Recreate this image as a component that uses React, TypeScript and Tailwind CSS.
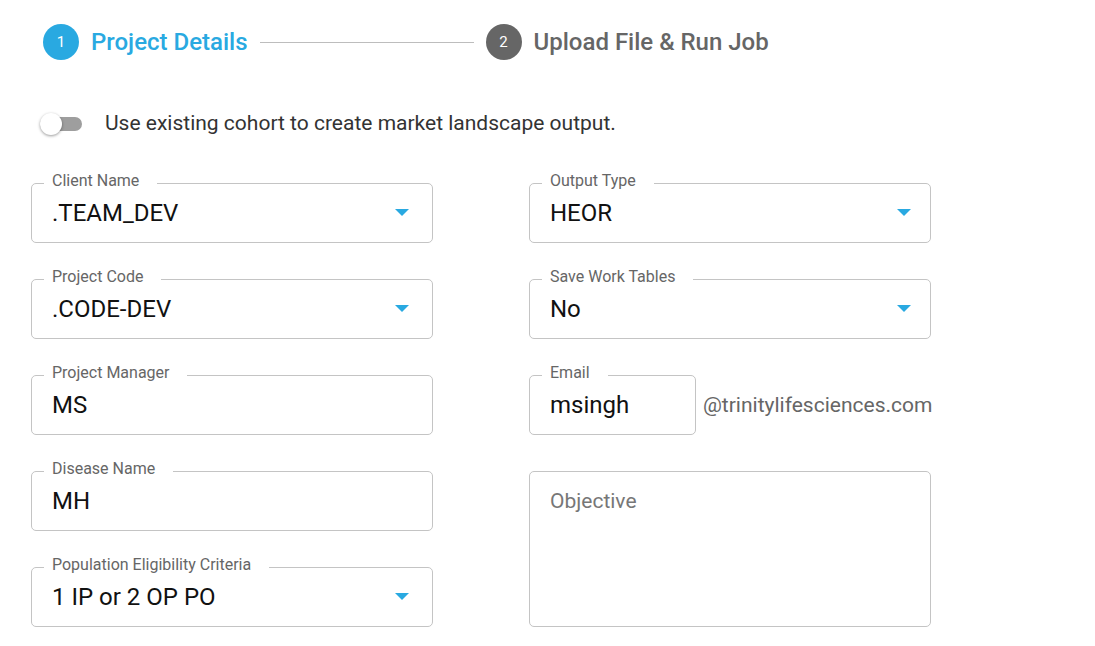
import React from "react";

const BLUE = "#29a9e1";

function Arrow() {
  return (
    <svg width="14" height="7" viewBox="0 0 14 7" className="shrink-0">
      <path d="M0 0 L14 0 L7 7 Z" fill={BLUE} />
    </svg>
  );
}

function Field({
  label,
  value,
  select,
  className = "w-[402px]",
  pr = "pr-[23px]",
}: {
  label: string;
  value: string;
  select?: boolean;
  className?: string;
  pr?: string;
}) {
  return (
    <div className={`relative h-[60px] rounded-[5px] border border-[#c4c4c4] ${className}`}>
      <span className="absolute left-[12px] top-[-13px] bg-white pl-[8px] pr-[18px] text-[16px] leading-[20px] text-[#666]">
        {label}
      </span>
      <div className={`flex h-full items-center justify-between pl-[20px] ${pr}`}>
        <span className="text-[24px] text-[#111]">{value}</span>
        {select && <Arrow />}
      </div>
    </div>
  );
}

export default function App() {
  return (
    <div
      className="h-[646px] w-[1095px] bg-white"
      style={{ fontFamily: "Roboto, 'Liberation Sans', sans-serif" }}
    >
      {/* Stepper */}
      <div className="flex items-center pl-[43px] pt-[24px]">
        <div className="flex h-[36px] w-[36px] items-center justify-center rounded-full bg-[#29a9e1] text-[15px] text-white">
          1
        </div>
        <span className="ml-[12px] text-[24px] font-medium text-[#29a9e1]">Project Details</span>
        <div className="mx-[12px] h-px w-[214px] bg-[#bdbdbd]" />
        <div className="flex h-[36px] w-[36px] items-center justify-center rounded-full bg-[#666] text-[15px] text-white">
          2
        </div>
        <span className="ml-[12px] text-[24px] font-medium text-[#666]">Upload File &amp; Run Job</span>
      </div>

      {/* Toggle */}
      <div className="mt-[48px] flex items-center pl-[40px]">
        <div className="relative h-[22px] w-[42px]">
          <div className="absolute left-0 right-0 top-[4px] h-[14px] rounded-full bg-[#9e9e9e]" />
          <div className="absolute left-0 top-0 h-[22px] w-[22px] rounded-full bg-white shadow-[0_1px_3px_rgba(0,0,0,0.4)]" />
        </div>
        <span className="ml-[23px] text-[21px] text-[#333]">Use existing cohort to create market landscape output.</span>
      </div>

      {/* Form */}
      <div className="mt-[43px] flex gap-[96px] pl-[31px]">
        <div className="flex flex-col gap-[36px]">
          <Field label="Client Name" value=".TEAM_DEV" select />
          <Field label="Project Code" value=".CODE-DEV" select />
          <Field label="Project Manager" value="MS" />
          <Field label="Disease Name" value="MH" />
          <Field label="Population Eligibility Criteria" value="1 IP or 2 OP PO" select />
        </div>
        <div className="flex flex-col gap-[36px]">
          <Field label="Output Type" value="HEOR" select pr="pr-[19px]" />
          <Field label="Save Work Tables" value="No" select pr="pr-[19px]" />
          <div className="flex items-center">
            <Field label="Email" value="msingh" className="w-[167px]" />
            <span className="ml-[7px] mt-[3px] text-[21px] text-[#666]">@trinitylifesciences.com</span>
          </div>
          <div className="h-[156px] w-[402px] rounded-[5px] border border-[#c4c4c4] px-[20px] pt-[14px]">
            <span className="text-[21px] text-[#777]">Objective</span>
          </div>
        </div>
      </div>
    </div>
  );
}
